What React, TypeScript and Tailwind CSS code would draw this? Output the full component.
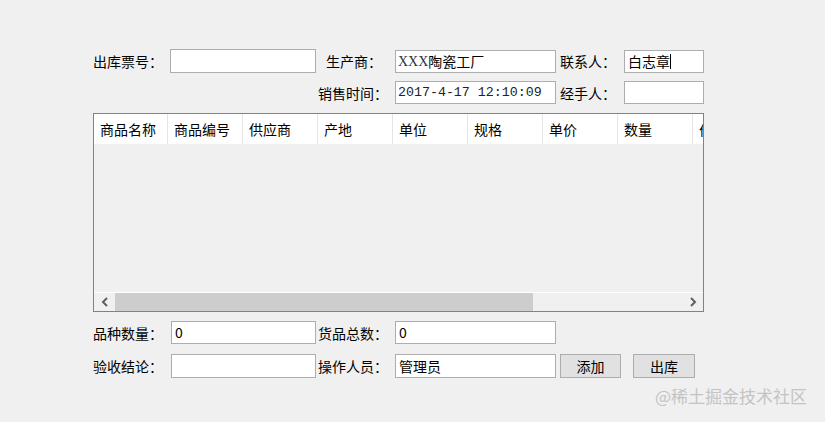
import React from 'react';

const cjk = { fontFamily: '"Noto Sans CJK SC", "Liberation Sans", sans-serif' };

const Field = ({ w, h = 'h-[24px]', children }: { w: string; h?: string; children?: React.ReactNode }) => (
  <div className={`${w} ${h} bg-white border border-[#adadad] flex items-center pl-[2px] text-[14px] text-black overflow-hidden whitespace-nowrap`}>
    {children}
  </div>
);

const Label = ({ w, pl = 'pl-0', children }: { w: string; pl?: string; children: React.ReactNode }) => (
  <div className={`${w} ${pl} text-[14px] text-black whitespace-nowrap leading-none`}>{children}</div>
);

const columns = ['商品名称', '商品编号', '供应商', '产地', '单位', '规格', '单价', '数量', '价格'];

const App: React.FC = () => {
  return (
    <div className="relative w-[825px] h-[422px] bg-[#f0f0f0] overflow-hidden" style={cjk}>
      <div className="flex flex-col pt-[49px] pl-[93px]">
        {/* top row */}
        <div className="flex items-center h-[24px]">
          <Label w="w-[77px]">出库票号：</Label>
          <Field w="w-[146px]" />
          <Label w="w-[79px]" pl="pl-[10px]">生产商：</Label>
          <Field w="w-[161px]" h="h-[23px]">
            <span style={{ fontFamily: '"Liberation Serif", serif' }} className="text-[#333]">XXX</span>
            <span>陶瓷工厂</span>
          </Field>
          <Label w="w-[68px]" pl="pl-[4px]">联系人：</Label>
          <Field w="w-[80px]" h="h-[23px]">
            <span className="pl-[1px]">白志章</span>
            <span className="w-px h-[15px] bg-black" />
          </Field>
        </div>

        <div className="flex items-center h-[23px] mt-[8px]">
          <div className="w-[225px]" />
          <Label w="w-[77px]">销售时间：</Label>
          <Field w="w-[161px]" h="h-[23px]">
            <span style={{ fontFamily: '"Liberation Mono", monospace' }} className="text-[13.3px] text-[#222]">2017-4-17 12:10:09</span>
          </Field>
          <Label w="w-[68px]" pl="pl-[4px]">经手人：</Label>
          <Field w="w-[80px]" h="h-[23px]" />
        </div>

        {/* table */}
        <div className="mt-[9px] w-[611px] h-[199px] border border-[#828282] flex flex-col bg-[#f0f0f0]">
          <div className="flex h-[30px] bg-white overflow-hidden">
            {columns.map((c, i) => (
              <div
                key={c}
                className={`${i === 0 ? 'w-[74px]' : 'w-[75px]'} shrink-0 h-full border-r border-[#e5e5e5] flex items-center pl-[6px] text-[14px] text-black whitespace-nowrap`}
              >
                {c}
              </div>
            ))}
          </div>
          <div className="flex-1 border-b border-white" />
          <div className="h-[18px] flex items-center bg-[#f0f0f0]">
            <div className="w-[21px] h-full flex items-center justify-center">
              <svg width="8" height="10" viewBox="0 0 8 10">
                <path d="M6 1 L2 5 L6 9" fill="none" stroke="#606060" strokeWidth="2" />
              </svg>
            </div>
            <div className="w-[418px] h-full bg-[#cdcdcd]" />
            <div className="flex-1" />
            <div className="w-[21px] h-full flex items-center justify-center">
              <svg width="8" height="10" viewBox="0 0 8 10">
                <path d="M2 1 L6 5 L2 9" fill="none" stroke="#606060" strokeWidth="2" />
              </svg>
            </div>
          </div>
        </div>

        {/* bottom rows */}
        <div className="flex items-center h-[23px] mt-[9px]">
          <Label w="w-[78px]">品种数量：</Label>
          <Field w="w-[145px]" h="h-[23px]">
            <span className="pl-[1px]">0</span>
          </Field>
          <Label w="w-[79px]" pl="pl-[2px]">货品总数：</Label>
          <Field w="w-[161px]" h="h-[23px]">
            <span className="pl-[1px]">0</span>
          </Field>
        </div>

        <div className="flex items-center h-[24px] mt-[10px]">
          <Label w="w-[78px]">验收结论：</Label>
          <Field w="w-[145px]" />
          <Label w="w-[79px]" pl="pl-[2px]">操作人员：</Label>
          <Field w="w-[161px]">
            <span className="pl-[1px]">管理员</span>
          </Field>
          <button className="ml-[4px] w-[61px] h-[24px] bg-[#e1e1e1] border border-[#adadad] text-[14px] text-black">添加</button>
          <button className="ml-[12px] w-[62px] h-[24px] bg-[#e1e1e1] border border-[#adadad] text-[14px] text-black">出库</button>
        </div>
      </div>

      <div className="absolute left-[655px] top-[387px] text-[17px] text-[#c4c4c4] whitespace-nowrap leading-none">
        @稀土掘金技术社区
      </div>
    </div>
  );
};

export default App;
